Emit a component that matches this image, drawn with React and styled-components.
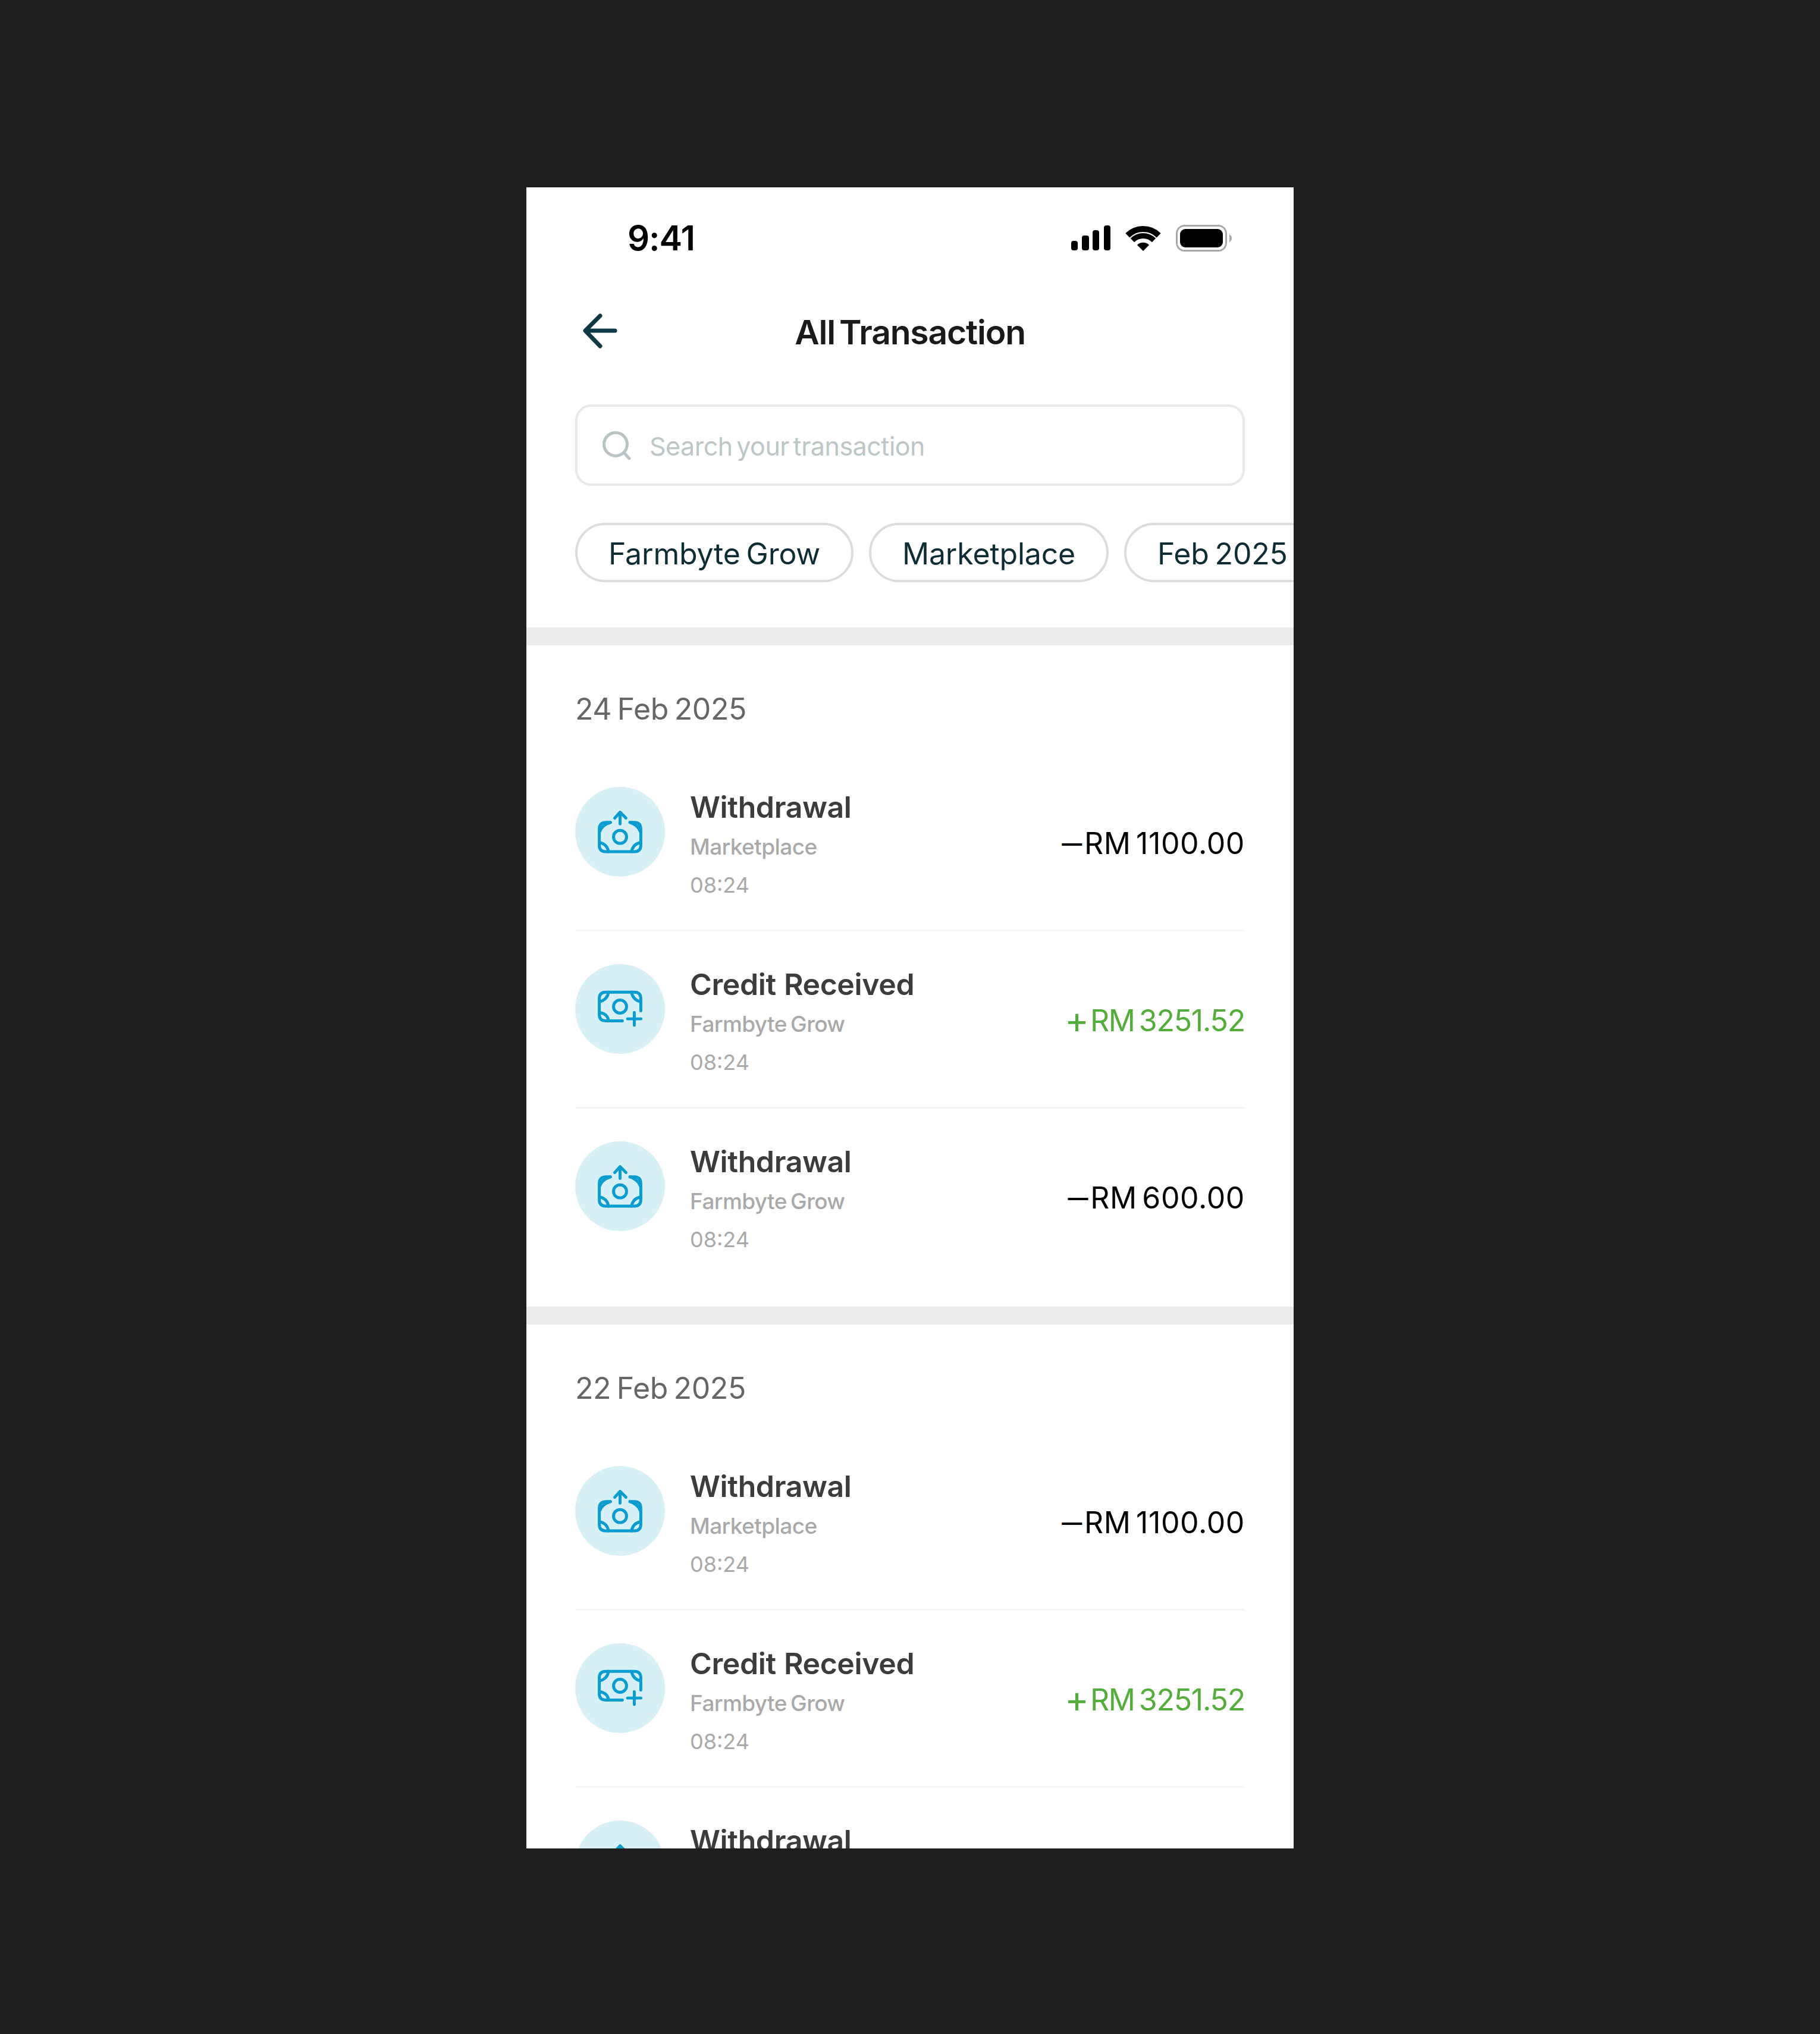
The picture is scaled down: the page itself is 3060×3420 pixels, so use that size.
import React from "react";
import styled, { createGlobalStyle } from "styled-components";

const GlobalStyle = createGlobalStyle`
  html, body {
    margin: 0;
    padding: 0;
    background: #1e1e1e;
  }
  body {
    font-family: Inter, "Noto Sans", sans-serif;
  }
`;

const sections = [
  {
    date: "24 Feb 2025",
    rows: [
      { type: "out", title: "Withdrawal", source: "Marketplace", amount: "RM 1100.00" },
      { type: "in", title: "Credit Received", source: "Farmbyte Grow", amount: "RM 3251.52" },
      { type: "out", title: "Withdrawal", source: "Farmbyte Grow", amount: "RM 600.00" },
    ],
  },
  {
    date: "22 Feb 2025",
    rows: [
      { type: "out", title: "Withdrawal", source: "Marketplace", amount: "RM 1100.00" },
      { type: "in", title: "Credit Received", source: "Farmbyte Grow", amount: "RM 3251.52" },
      { type: "out", title: "Withdrawal", source: "Farmbyte Grow", amount: "RM 600.00" },
    ],
  },
];

const WithdrawIcon = () => (
  <svg width="151" height="151" viewBox="53 70 454 454" fill="none" stroke="#0b9cd0" strokeWidth="15" strokeLinecap="round" strokeLinejoin="round">
    <path d="M230 250H208Q175 250 175 285V365Q175 398 208 398H352Q385 398 385 365V285Q385 250 352 250H330" />
    <path d="M232 250Q190 262 178 295M178 352Q215 360 222 398M382 352Q345 360 338 398M330 250Q370 262 382 295" />
    <circle cx="280" cy="323" r="33" />
    <path d="M280 258V200M253 228L280 198L310 228" />
  </svg>
);

const CreditIcon = () => (
  <svg width="151" height="151" viewBox="53 65 454 454" fill="none" stroke="#0b9cd0" strokeWidth="15" strokeLinecap="round" strokeLinejoin="round">
    <path d="M292 352H208Q175 352 175 320V240Q175 207 208 207H352Q385 207 385 240V302" />
    <path d="M178 255Q215 245 222 207M338 207Q345 245 382 255M178 310Q215 315 222 350" />
    <circle cx="280" cy="280" r="33" />
    <path d="M318 342H386M352 310V375" />
  </svg>
);

const SignalIcon = () => (
  <svg width="66" height="42" viewBox="0 0 66 42" fill="#000">
    <rect x="0" y="26" width="11" height="16" rx="4" />
    <rect x="18" y="17" width="12" height="25" rx="4" />
    <rect x="36" y="8" width="11" height="34" rx="4" />
    <rect x="55" y="0" width="11" height="42" rx="4" />
  </svg>
);

const WifiIcon = () => (
  <svg width="60" height="43" viewBox="0 0 60 43" fill="none" stroke="#000">
    <path d="M3.84 16.84A37 37 0 0 1 56.16 16.84" strokeWidth="10" />
    <path d="M11.97 24.97A25.5 25.5 0 0 1 48.03 24.97" strokeWidth="9" />
    <path d="M30 43L20 33A14 14 0 0 1 40 33Z" fill="#000" stroke="none" />
  </svg>
);

const BatteryIcon = () => (
  <svg width="95" height="45" viewBox="0 0 95 45" fill="none">
    <rect x="1.5" y="1.5" width="83" height="42" rx="13" stroke="#a8a8a8" strokeWidth="3" />
    <rect x="7" y="7" width="72" height="31" rx="9" fill="#000" />
    <path d="M90 16C93 18 94 20 94 22.5C94 25 93 27 90 29Z" fill="#a8a8a8" />
  </svg>
);

const BackIcon = () => (
  <svg width="60" height="60" viewBox="0 0 60 60" fill="none" stroke="#0f3a44" strokeWidth="7" strokeLinecap="round" strokeLinejoin="round">
    <path d="M54 30H5M29 5L4 30L29 56" />
  </svg>
);

const SearchIcon = () => (
  <svg width="48" height="48" viewBox="0 0 48 48" fill="none" stroke="#b9c3c3" strokeWidth="5" strokeLinecap="round">
    <circle cx="22" cy="22" r="19.5" />
    <path d="M36 36L45 46" />
  </svg>
);

const App = () => (
  <>
    <GlobalStyle />
    <Page>
      <Phone>
        <StatusBar>
          <Clock>9:41</Clock>
          <StatusIcons>
            <SignalIcon />
            <WifiIcon />
            <BatteryIcon />
          </StatusIcons>
        </StatusBar>
        <Header>
          <BackButton>
            <BackIcon />
          </BackButton>
          <Title>All Transaction</Title>
        </Header>
        <SearchBox>
          <SearchIcon />
          <Placeholder>Search your transaction</Placeholder>
        </SearchBox>
        <Chips>
          <Chip>Farmbyte Grow</Chip>
          <Chip>Marketplace</Chip>
          <Chip>Feb 2025</Chip>
        </Chips>
        {sections.map((section) => (
          <Section key={section.date}>
            <DateLabel>{section.date}</DateLabel>
            {section.rows.map((row, i) => (
              <Row key={i}>
                <IconCircle>{row.type === "in" ? <CreditIcon /> : <WithdrawIcon />}</IconCircle>
                <RowText>
                  <RowTitle>{row.title}</RowTitle>
                  <RowSource>{row.source}</RowSource>
                  <RowTime>08:24</RowTime>
                </RowText>
                <Amount $income={row.type === "in"}>
                  <Sign $income={row.type === "in"}>{row.type === "in" ? "+" : "—"}</Sign>
                  {row.amount}
                </Amount>
              </Row>
            ))}
          </Section>
        ))}
      </Phone>
    </Page>
  </>
);

const Page = styled.div`
  height: 3420px;
  box-sizing: border-box;
  padding-top: 315px;
  display: flex;
  justify-content: center;
  background: #1e1e1e;
  overflow: hidden;
`;

const Phone = styled.div`
  width: 1290px;
  height: 2793px;
  background: #fff;
  overflow: hidden;
`;

const StatusBar = styled.div`
  height: 170px;
  display: flex;
  align-items: center;
  justify-content: space-between;
  padding: 0 103px 0 170px;
`;

const Clock = styled.div`
  font-size: 58px;
  font-weight: 600;
  letter-spacing: -1px;
  color: #000;
`;

const StatusIcons = styled.div`
  display: flex;
  align-items: center;
  gap: 25px;
`;

const Header = styled.div`
  height: 142px;
  display: grid;
  grid-template-columns: 1fr auto 1fr;
  align-items: center;
  padding: 0 82px;
`;

const BackButton = styled.div`
  display: flex;
  align-items: center;
  margin-left: 13px;
`;

const Title = styled.div`
  font-size: 57px;
  font-weight: 600;
  letter-spacing: -1.2px;
  word-spacing: -6px;
  color: #1a1a1a;
  margin-top: 4px;
`;

const SearchBox = styled.div`
  box-sizing: border-box;
  height: 137px;
  margin: 53px 82px 0;
  padding: 0 42px;
  display: flex;
  align-items: center;
  gap: 31px;
  border: 4px solid #e8e8e8;
  border-radius: 27px;
`;

const Placeholder = styled.span`
  font-size: 43px;
  font-weight: 400;
  letter-spacing: -0.5px;
  word-spacing: -5px;
  color: #bcc6c6;
  margin-top: 2px;
`;

const Chips = styled.div`
  display: flex;
  gap: 26px;
  padding: 62px 0 76px 82px;
  border-bottom: 30px solid #eaeaea;
`;

const Chip = styled.div`
  flex-shrink: 0;
  box-sizing: border-box;
  height: 100px;
  padding: 4px 52px 0;
  display: flex;
  align-items: center;
  border: 4px solid #dcdcdc;
  border-radius: 50px;
  font-size: 50px;
  letter-spacing: -0.2px;
  word-spacing: -4px;
  color: #0d2c33;
`;

const Section = styled.div`
  padding: 77px 82px 38px;
  & + & {
    border-top: 30px solid #eaeaea;
  }
`;

const DateLabel = styled.div`
  font-size: 50px;
  line-height: 60px;
  letter-spacing: -0.4px;
  word-spacing: -4px;
  color: #666;
  margin-bottom: 46px;
`;

const Row = styled.div`
  display: flex;
  align-items: center;
  height: 190px;
  padding: 55px 0 50px;
  border-bottom: 3px solid #f5f5f5;
  &:last-child {
    border-bottom: none;
  }
`;

const IconCircle = styled.div`
  align-self: flex-start;
  flex-shrink: 0;
  width: 151px;
  height: 151px;
  border-radius: 50%;
  background: #d6f0f5;
`;

const RowText = styled.div`
  flex: 1;
  height: 190px;
  margin-left: 42px;
  padding-top: 4px;
  box-sizing: border-box;
`;

const RowTitle = styled.div`
  font-size: 50px;
  line-height: 60px;
  font-weight: 600;
  letter-spacing: -0.4px;
  word-spacing: 1px;
  color: #3c3c3c;
`;

const RowSource = styled.div`
  font-size: 37px;
  line-height: 60px;
  font-weight: 500;
  letter-spacing: -0.6px;
  word-spacing: -3px;
  color: #a9a9a9;
  margin-top: 7px;
`;

const RowTime = styled.div`
  font-size: 36px;
  line-height: 60px;
  color: #a9a9a9;
  margin-top: 4px;
`;

const Amount = styled.div`
  font-size: 50px;
  font-weight: 400;
  letter-spacing: ${(p) => (p.$income ? "-1.2px" : "0.6px")};
  word-spacing: -6px;
  color: ${(p) => (p.$income ? "#52ad3a" : "#000")};
`;

const Sign = styled.span`
  font-size: ${(p) => (p.$income ? "62px" : "34px")};
  font-weight: ${(p) => (p.$income ? 400 : 700)};
  vertical-align: ${(p) => (p.$income ? "-3px" : "6px")};
  line-height: 0;
  margin-right: 3px;
`;

export default App;
